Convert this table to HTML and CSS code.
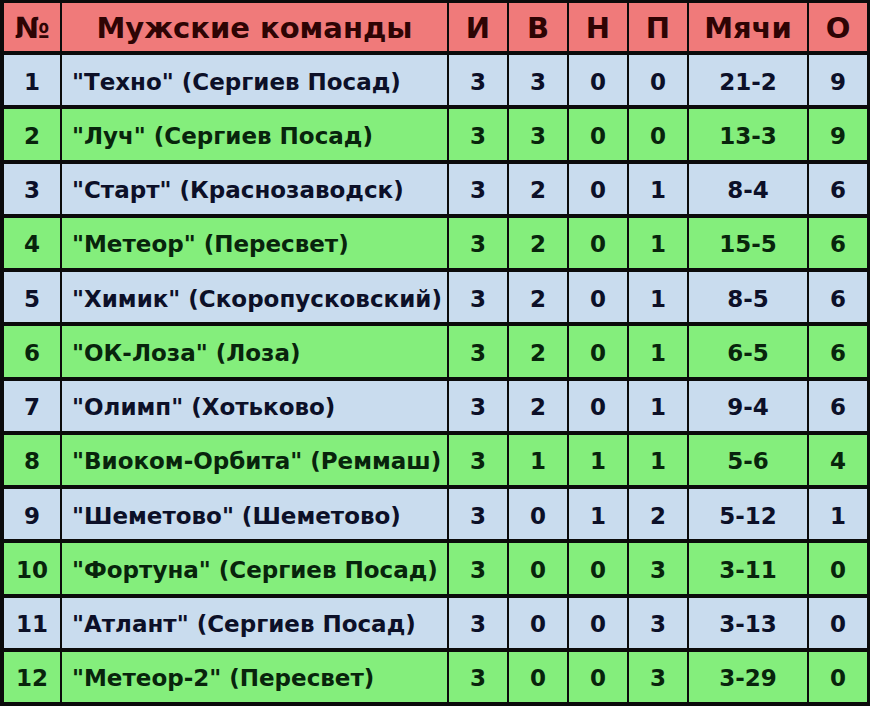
FILE: index.html
```html
<!DOCTYPE html>
<html lang="ru">
<head>
<meta charset="utf-8">
<title>Мужские команды</title>
<link rel="stylesheet" href="styles.css">
</head>
<body>
<div class="table">
  <div class="cell head">№</div>
  <div class="cell head name-head">Мужские команды</div>
  <div class="cell head">И</div>
  <div class="cell head">В</div>
  <div class="cell head">Н</div>
  <div class="cell head">П</div>
  <div class="cell head">Мячи</div>
  <div class="cell head">О</div>

  <div class="cell blue">1</div><div class="cell blue name">"Техно" (Сергиев Посад)</div><div class="cell blue">3</div><div class="cell blue">3</div><div class="cell blue">0</div><div class="cell blue">0</div><div class="cell blue">21-2</div><div class="cell blue">9</div>
  <div class="cell green">2</div><div class="cell green name">"Луч" (Сергиев Посад)</div><div class="cell green">3</div><div class="cell green">3</div><div class="cell green">0</div><div class="cell green">0</div><div class="cell green">13-3</div><div class="cell green">9</div>
  <div class="cell blue">3</div><div class="cell blue name">"Старт" (Краснозаводск)</div><div class="cell blue">3</div><div class="cell blue">2</div><div class="cell blue">0</div><div class="cell blue">1</div><div class="cell blue">8-4</div><div class="cell blue">6</div>
  <div class="cell green">4</div><div class="cell green name">"Метеор" (Пересвет)</div><div class="cell green">3</div><div class="cell green">2</div><div class="cell green">0</div><div class="cell green">1</div><div class="cell green">15-5</div><div class="cell green">6</div>
  <div class="cell blue">5</div><div class="cell blue name">"Химик" (Скоропусковский)</div><div class="cell blue">3</div><div class="cell blue">2</div><div class="cell blue">0</div><div class="cell blue">1</div><div class="cell blue">8-5</div><div class="cell blue">6</div>
  <div class="cell green">6</div><div class="cell green name">"ОК-Лоза" (Лоза)</div><div class="cell green">3</div><div class="cell green">2</div><div class="cell green">0</div><div class="cell green">1</div><div class="cell green">6-5</div><div class="cell green">6</div>
  <div class="cell blue">7</div><div class="cell blue name">"Олимп" (Хотьково)</div><div class="cell blue">3</div><div class="cell blue">2</div><div class="cell blue">0</div><div class="cell blue">1</div><div class="cell blue">9-4</div><div class="cell blue">6</div>
  <div class="cell green">8</div><div class="cell green name">"Виоком-Орбита" (Реммаш)</div><div class="cell green">3</div><div class="cell green">1</div><div class="cell green">1</div><div class="cell green">1</div><div class="cell green">5-6</div><div class="cell green">4</div>
  <div class="cell blue">9</div><div class="cell blue name">"Шеметово" (Шеметово)</div><div class="cell blue">3</div><div class="cell blue">0</div><div class="cell blue">1</div><div class="cell blue">2</div><div class="cell blue">5-12</div><div class="cell blue">1</div>
  <div class="cell green">10</div><div class="cell green name">"Фортуна" (Сергиев Посад)</div><div class="cell green">3</div><div class="cell green">0</div><div class="cell green">0</div><div class="cell green">3</div><div class="cell green">3-11</div><div class="cell green">0</div>
  <div class="cell blue">11</div><div class="cell blue name">"Атлант" (Сергиев Посад)</div><div class="cell blue">3</div><div class="cell blue">0</div><div class="cell blue">0</div><div class="cell blue">3</div><div class="cell blue">3-13</div><div class="cell blue">0</div>
  <div class="cell green">12</div><div class="cell green name">"Метеор-2" (Пересвет)</div><div class="cell green">3</div><div class="cell green">0</div><div class="cell green">0</div><div class="cell green">3</div><div class="cell green">3-29</div><div class="cell green">0</div>
</div>
</body>
</html>
```
FILE: styles.css
```css
html, body {
  margin: 0;
  padding: 0;
  background: #0b0b0b;
}

.table {
  box-sizing: border-box;
  width: 870px;
  height: 706px;
  padding: 3px 3px 4px 4px;
  display: grid;
  grid-template-columns: 56px 385px 58px 58px 58px 58px 118px 58px;
  grid-template-rows: 48px repeat(12, 1fr);
  column-gap: 2px;
  row-gap: 4px;
  background: #0b0b0b;
  font-family: "DejaVu Sans", Verdana, sans-serif;
  font-weight: bold;
}

.cell {
  box-sizing: border-box;
  display: flex;
  align-items: center;
  justify-content: center;
  font-size: 23px;
  white-space: nowrap;
  overflow: hidden;
  padding-top: 3px;
}

.head {
  background: #f07a7a;
  color: #2e0404;
  font-size: 29px;
  padding-top: 1px;
}

.blue {
  background: #c9dcee;
  color: #0c1028;
}

.green {
  background: #84ee7c;
  color: #08240c;
}

.name {
  justify-content: flex-start;
  padding-left: 10px;
}
```
